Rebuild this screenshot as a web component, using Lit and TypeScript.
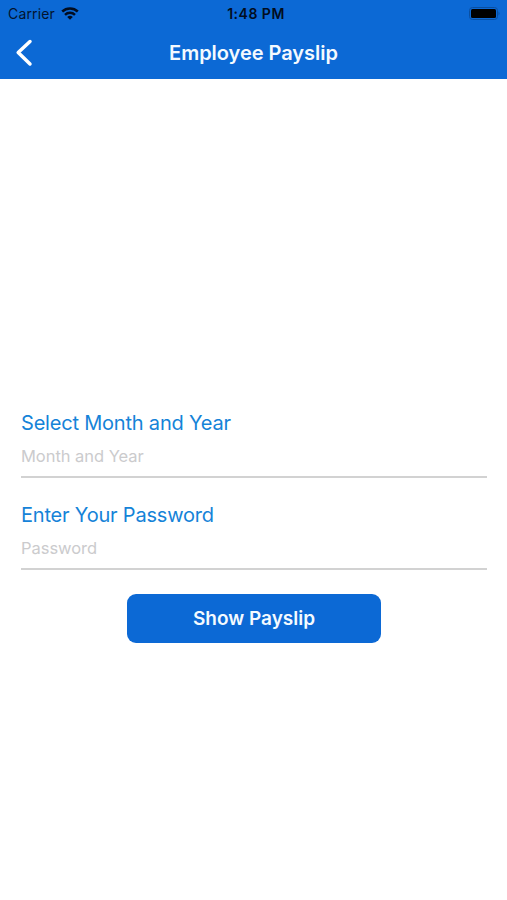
import { LitElement, html, css } from "lit";
import { customElement } from "lit/decorators.js";

@customElement("app-root")
export class AppRoot extends LitElement {
  static styles = css`
    :host { display: flex; flex-direction: column; height: 900px; background: #fff; font-family: Inter, "Liberation Sans", sans-serif; overflow: hidden; }
    * { box-sizing: border-box; }
    header { height: 79px; background: #0c69d5; }
    .status { height: 27px; display: grid; grid-template-columns: 1fr auto 1fr; align-items: center; padding: 0 7px 0 8px; font-size: 14px; color: #03142e; line-height: 27px; }
    .carrier { display: flex; align-items: center; gap: 6px; letter-spacing: .15px; }
    .time { font-weight: 600; font-size: 14px; letter-spacing: .5px; padding-left: 4px; color: #020d20; }
    .battery { justify-self: end; display: block; }
    .nav { height: 52px; display: grid; grid-template-columns: 40px 1fr 40px; align-items: center; padding: 0 8px; }
    .title { text-align: center; color: #f4faff; font-weight: 600; font-size: 20px; letter-spacing: -.03px; line-height: 24px; }
    svg { display: block; }
    main { padding: 330px 20px 0 21px; }
    .field { height: 92px; }
    label { display: block; height: 27px; line-height: 29px; font-size: 20px; letter-spacing: -.2px; color: #1583d8; }
    .input { height: 42px; line-height: 41px; border-bottom: 2px solid #d2d2d2; font-size: 16.5px; letter-spacing: -.04px; color: #cbcbcd; }
    .submit { display: block; margin: 1px auto 0; width: 254px; height: 49px; border: 0; border-radius: 9px; background: #0c69d5; color: #f4faff; font: 600 19px Inter, sans-serif; }
  `;
  render() {
    return html`
      <header>
        <div class="status">
          <div class="carrier"><span>Carrier</span>
            <svg width="18" height="13" viewBox="0 0 18 13" fill="none" stroke="#020d20" stroke-width="2.5"><path d="M1.2 4.5a11.3 11.3 0 0 1 15.6 0M4 7.8a7.3 7.3 0 0 1 10 0"/><path d="M9 12.8 6.2 10a4 4 0 0 1 5.6 0z" fill="#020d20" stroke="none"/></svg>
          </div>
          <span class="time">1:48 PM</span>
          <svg class="battery" width="31" height="13" viewBox="0 0 31 13"><rect x=".5" y=".5" width="28" height="12" rx="3" fill="none" stroke="#0a4fa0"/><rect x="2" y="2" width="25" height="9" rx="1.5" fill="#000"/><path d="M29.5 4.5q2 2 0 4z" fill="#0a4fa0"/></svg>
        </div>
        <div class="nav">
          <svg width="26" height="28" viewBox="0 0 26 28" fill="none" stroke="#fff" stroke-width="3.5" stroke-linecap="round" stroke-linejoin="round"><path d="M22 2.5 10.2 13.5 22 25"/></svg>
          <span class="title">Employee Payslip</span>
        </div>
      </header>
      <main>
        <div class="field"><label>Select Month and Year</label><div class="input">Month and Year</div></div>
        <div class="field"><label>Enter Your Password</label><div class="input">Password</div></div>
        <button class="submit">Show Payslip</button>
      </main>`;
  }
}
